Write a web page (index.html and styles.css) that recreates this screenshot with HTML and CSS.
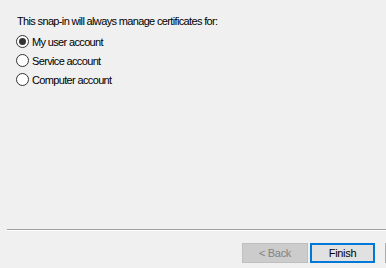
FILE: index.html
```html
<!DOCTYPE html>
<html lang="en">

<head>
    <meta charset="UTF-8">
    <meta name="viewport" content="width=device-width, initial-scale=1.0">
    <title>Certificates snap-in</title>
    <link rel="stylesheet" href="styles.css">
</head>

<body>
    <div class="wizard">
        <div class="content">
            <p class="intro">This snap-in will always manage certificates for:</p>
            <label class="option">
                <input type="radio" name="account" checked>
                <span>My user account</span>
            </label>
            <label class="option">
                <input type="radio" name="account">
                <span>Service account</span>
            </label>
            <label class="option">
                <input type="radio" name="account">
                <span>Computer account</span>
            </label>
        </div>
        <div class="footer">
            <div class="separator"></div>
            <div class="buttons">
                <button class="btn" disabled>&lt; Back</button>
                <button class="btn default">Finish</button>
                <button class="btn" aria-label="Cancel"></button>
            </div>
        </div>
    </div>
</body>

</html>
```

FILE: styles.css
```css
* {
    margin: 0;
    padding: 0;
    box-sizing: border-box;
}

body {
    height: 100vh;
    overflow: hidden;
    background-color: #f0f0f0;
    font-family: "Liberation Sans", Arial, sans-serif;
    font-size: 11px;
    letter-spacing: -0.65px;
    color: #000;
}

.wizard {
    height: 100%;
    display: flex;
    flex-direction: column;
}

.content {
    flex: 1;
    padding: 15px 0 0 17px;
    display: flex;
    flex-direction: column;
}

.intro {
    line-height: 13px;
    margin-bottom: 4px;
}

.option {
    display: flex;
    align-items: center;
    gap: 3px;
    height: 19px;
    margin-left: -1px;
}

.option input {
    appearance: none;
    width: 13px;
    height: 13px;
    border: 1px solid #333;
    border-radius: 50%;
    background-color: #fff;
    display: grid;
    place-items: center;
}

.option input:checked::before {
    content: "";
    width: 7px;
    height: 7px;
    border-radius: 50%;
    background-color: #333;
}

.footer {
    padding-left: 7px;
}

.separator {
    height: 2px;
    border-top: 1px solid #a0a0a0;
    border-bottom: 1px solid #fff;
}

.buttons {
    display: flex;
    gap: 2px;
    padding: 12px 0 5px 235px;
    white-space: nowrap;
}

.btn {
    flex: none;
    width: 66px;
    height: 20px;
    font-family: inherit;
    font-size: 11px;
    letter-spacing: -0.3px;
    background-color: #e1e1e1;
    border: 1px solid #adadad;
    color: #000;
}

.btn:disabled {
    background-color: #cccccc;
    border-color: #bfbfbf;
    color: #838383;
}

.btn.default {
    width: 65px;
    border: 2px solid #0078d7;
    margin-right: 8px;
}
```
